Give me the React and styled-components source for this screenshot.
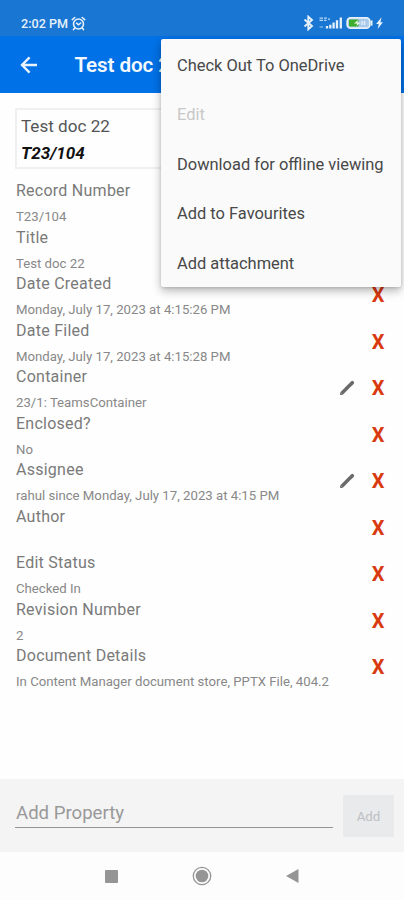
import React, { useState } from 'react'
import styled, { createGlobalStyle } from 'styled-components'

const properties = [
  { label: 'Record Number', value: 'T23/104' },
  { label: 'Title', value: 'Test doc 22' },
  { label: 'Date Created', value: 'Monday, July 17, 2023 at 4:15:26 PM', removable: true },
  { label: 'Date Filed', value: 'Monday, July 17, 2023 at 4:15:28 PM', removable: true },
  { label: 'Container', value: '23/1: TeamsContainer', removable: true, editable: true },
  { label: 'Enclosed?', value: 'No', removable: true },
  { label: 'Assignee', value: 'rahul since Monday, July 17, 2023 at 4:15 PM', removable: true, editable: true },
  { label: 'Author', value: '', removable: true },
  { label: 'Edit Status', value: 'Checked In', removable: true },
  { label: 'Revision Number', value: '2', removable: true },
  { label: 'Document Details', value: 'In Content Manager document store, PPTX File, 404.2', removable: true },
]

const menuItems = [
  { text: 'Check Out To OneDrive' },
  { text: 'Edit', disabled: true },
  { text: 'Download for offline viewing' },
  { text: 'Add to Favourites' },
  { text: 'Add attachment' },
]

function AlarmIcon() {
  return (
    <svg width="15" height="15" viewBox="0 0 15 15" fill="none" stroke="#e6f1fb" strokeWidth="1.6" strokeLinecap="round">
      <circle cx="7.5" cy="8" r="5" />
      <path d="M1.3 3.6 3.8 1.5M13.7 3.6 11.2 1.5M3.6 12.2 2.5 13.6M11.4 12.2l1.1 1.4M5.6 7.2l1.9 1.6 2.2-1.8" />
    </svg>
  )
}

function StatusIcons() {
  return (
    <svg width="82" height="16" viewBox="0 0 82 16" fill="none">
      <path d="M2.5 4.5 10 11 6.3 14.3V1.7L10 5 2.5 11.5" stroke="#e6f1fb" strokeWidth="1.9" />
      <path d="M17.5 3.2h3.5M17.5 5.3h3.5M22 3.2h3M22 5.3h2.5M26 4.2h2" stroke="#b9d5f2" strokeWidth="1.3" />
      <path d="M17.5 12h3.5" stroke="#7fb2e6" strokeWidth="1.4" />
      <path d="M25 13.5v-2.5M28.3 13.5V9.8M31.6 13.5V7.6M35 13.5V5.2M38.8 13.5V2.6" stroke="#e6f1fb" strokeWidth="2.3" />
      <rect x="45.2" y="2.8" width="22.6" height="10.4" rx="3.4" fill="#a9c9e8" stroke="#e6f1fb" strokeWidth="1.7" />
      <rect x="47" y="4.6" width="9.5" height="6.8" rx="1" fill="#3dae2b" />
      <path d="m56 5-4 3.4h3.2L54.4 11l4-3.6h-3z" fill="#f4fbf2" />
      <path d="M60 6v4M62.5 6v4" stroke="#e6f1fb" strokeWidth="1.3" />
      <path d="M69.6 5.4v5.2" stroke="#e6f1fb" strokeWidth="1.8" />
      <path d="m79.5 2.3-5.4 6.6h2.6l-1 5.1 5.2-6.8h-2.4z" fill="#e6f1fb" />
    </svg>
  )
}

function BackArrow() {
  return (
    <svg width="18" height="18" viewBox="0 0 18 18" fill="none" stroke="#e9f3fd" strokeWidth="2.4">
      <path d="M17 9H2.2M9.6 1.4 2 9l7.6 7.6" />
    </svg>
  )
}

function PencilIcon() {
  return (
    <svg width="16" height="16" viewBox="0 0 16 16" fill="none" stroke="#6a6a6a">
      <path d="M2.6 13.4 11.2 4.8" strokeWidth="3.5" />
      <path d="m11.8 4.2 1.5-1.5" strokeWidth="3.7" strokeLinecap="round" />
      <path d="M1.1 14.9v-2.8l2.8 2.8z" fill="#6a6a6a" stroke="none" />
    </svg>
  )
}

function Property({ label, value, editable, removable }) {
  return (
    <Row>
      <Details>
        <Label>{label}</Label>
        <Value>{value}</Value>
      </Details>
      {editable && <EditButton><PencilIcon /></EditButton>}
      {removable && <RemoveButton>X</RemoveButton>}
    </Row>
  )
}

function App() {
  let [property, setProperty] = useState('')
  return (
    <Screen>
      <GlobalStyle />
      <StatusBar>
        <Clock>2:02 PM</Clock>
        <AlarmIcon />
        <StatusRight><StatusIcons /></StatusRight>
      </StatusBar>
      <AppBar>
        <BackArrow />
        <Heading>Test doc 22</Heading>
      </AppBar>
      <Content>
        <Summary>
          <SummaryTitle>Test doc 22</SummaryTitle>
          <SummaryNumber>T23/104</SummaryNumber>
        </Summary>
        {properties.map((item) => <Property key={item.label} {...item} />)}
      </Content>
      <AddBar>
        <AddInput
          placeholder='Add Property'
          value={property}
          onChange={(e) => setProperty(e.target.value)}
        />
        <AddButton disabled={!property}>Add</AddButton>
      </AddBar>
      <NavBar>
        <svg width="13" height="13"><rect width="13" height="13" rx="1" fill="#959595" /></svg>
        <svg width="20" height="20" viewBox="0 0 20 20">
          <circle cx="10" cy="10" r="8.7" fill="none" stroke="#959595" strokeWidth="1.3" />
          <circle cx="10" cy="10" r="6.3" fill="#959595" />
        </svg>
        <svg width="13" height="14"><path d="M0 7 12.5 0v14z" fill="#959595" /></svg>
      </NavBar>
      <Menu>
        {menuItems.map((item) => (
          <MenuItem key={item.text} $disabled={item.disabled}>{item.text}</MenuItem>
        ))}
      </Menu>
    </Screen>
  )
}

export default App

const GlobalStyle = createGlobalStyle`
  *{
    box-sizing:border-box;
  }
  body{
    margin:0;
    background:#fff;
    font-family:Roboto, sans-serif;
  }
`
const Screen = styled.div`
  position:relative;
  display:flex;
  flex-direction:column;
  width:404px;
  height:900px;
  overflow:hidden;
  background:#fefefe;
`
const StatusBar = styled.div`
  display:flex;
  align-items:center;
  flex:none;
  height:36px;
  padding:10px 20px 0 21px;
  background:#1976d2;
  color:#e6f1fb;
`
const Clock = styled.span`
  width:50px;
  font-size:12.6px;
  font-weight:500;
  white-space:nowrap;
`
const StatusRight = styled.div`
  display:flex;
  margin-left:auto;
`
const AppBar = styled.div`
  display:flex;
  align-items:center;
  flex:none;
  height:57px;
  padding:0 20px;
  background:#0071e6;
`
const Heading = styled.h1`
  margin:1px 0 0 36.5px;
  color:#f4f9ff;
  font-size:20.6px;
  font-weight:600;
  letter-spacing:-.1px;
  white-space:nowrap;
`
const Content = styled.div`
  flex:1;
  min-height:0;
  padding:15px 15px 0;
`
const Summary = styled.div`
  height:61px;
  margin-bottom:10px;
  padding:3px 4px;
  border:2px solid #f0f0f0;
`
const SummaryTitle = styled.div`
  color:#555;
  font-size:17.1px;
  line-height:27px;
`
const SummaryNumber = styled.div`
  color:#111;
  font-size:17px;
  font-style:italic;
  font-weight:700;
  line-height:27px;
`
const Row = styled.div`
  display:flex;
  align-items:center;
  height:46.5px;
`
const Details = styled.div`
  flex:1;
  padding-left:1px;
  white-space:nowrap;
`
const Label = styled.div`
  height:26px;
  color:#7a7a7a;
  font-size:16px;
  line-height:24px;
  letter-spacing:.25px;
`
const Value = styled.div`
  height:20px;
  color:#888;
  font-size:13.2px;
  line-height:24px;
`
const EditButton = styled.span`
  display:flex;
  margin-right:17px;
`
const RemoveButton = styled.span`
  width:13px;
  margin-right:4.5px;
  color:#d93a10;
  font-size:20px;
  font-weight:700;
  line-height:24px;
  text-align:center;
`
const AddBar = styled.div`
  display:flex;
  align-items:flex-start;
  flex:none;
  height:73px;
  padding:16px 10px 0 15px;
  background:#f4f4f4;
`
const AddInput = styled.input`
  width:318px;
  height:33px;
  padding:4px 0 0 1px;
  border:none;
  border-bottom:1.5px solid #959595;
  outline:none;
  background:transparent;
  color:#555;
  font-family:inherit;
  font-size:18.6px;
  &::placeholder{
    color:#999;
    opacity:1;
  }
`
const AddButton = styled.button`
  width:51px;
  height:42px;
  margin-left:auto;
  padding:0;
  border:none;
  background:#e9eaeb;
  color:#bcbfc3;
  font-family:inherit;
  font-size:13.3px;
`
const NavBar = styled.div`
  display:flex;
  align-items:center;
  justify-content:space-between;
  flex:none;
  height:48px;
  padding:0 105px;
  background:#fdfdfd;
`
const Menu = styled.div`
  position:absolute;
  top:39px;
  left:161px;
  width:240px;
  height:248px;
  padding:1.5px 0 0;
  border-radius:2px;
  background:#fafafa;
  box-shadow:0 4px 10px rgba(0,0,0,.28), 0 1px 3px rgba(0,0,0,.12);
`
const MenuItem = styled.div`
  height:49.5px;
  padding-left:16px;
  color:${(props) => (props.$disabled ? '#c8c8c8' : '#484848')};
  font-size:16.45px;
  line-height:49.5px;
  white-space:nowrap;
`
